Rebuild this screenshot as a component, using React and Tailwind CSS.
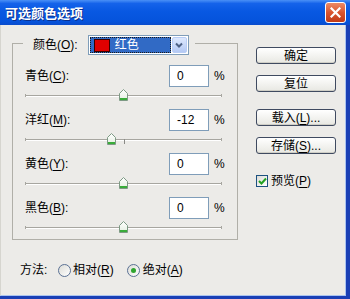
import React from "react";

// ─── DATA ─────────────────────────────
const ROWS = [
  { name: "青色", hot: "C", value: 0 },
  { name: "洋红", hot: "M", value: -12 },
  { name: "黄色", hot: "Y", value: 0 },
  { name: "黑色", hot: "B", value: 0 },
];

const BUTTONS = [
  { label: "确定", mt: "mt-0" },
  { label: "复位", mt: "mt-[11px]" },
  { label: "载入", hot: "L", dots: true, mt: "mt-[17px]" },
  { label: "存储", hot: "S", dots: true, mt: "mt-[11px]" },
];

const TRACK_W = 197;

function Hot({ name, hot, colon = true }) {
  return (
    <span className="whitespace-nowrap">
      {name}(<span className="underline underline-offset-2">{hot}</span>){colon ? ":" : ""}
    </span>
  );
}

// ─── SLIDER THUMB ─────────────────────────────
const Thumb = () => (
  <svg width="9" height="12" viewBox="0 0 9 12">
    <defs>
      <linearGradient id="tg" x1="0" y1="0" x2="0" y2="1">
        <stop offset="0" stopColor="#ffffff" />
        <stop offset="1" stopColor="#e4efe0" />
      </linearGradient>
    </defs>
    <polygon points="4.5,0.5 8.5,4.5 8.5,11.5 0.5,11.5 0.5,4.5" fill="url(#tg)" stroke="#7d9a84" />
    <rect x="1" y="9" width="7" height="2" fill="#3aac3a" />
  </svg>
);

function Slider({ value }) {
  const left = TRACK_W / 2 + (value / 100) * (TRACK_W / 2) - 4.5;
  return (
    <div className="relative ml-[12px] mt-[2px] h-[12px]" style={{ width: TRACK_W }}>
      <div className="absolute left-0 right-0 top-[6px] h-[1px] bg-[#a7a6a0]" />
      <div className="absolute left-0 right-0 top-[7px] h-[1px] bg-[#ffffff]" />
      <div className="absolute left-0 top-[5px] h-[3px] w-[1px] bg-[#a7a6a0]" />
      <div className="absolute right-0 top-[5px] h-[3px] w-[1px] bg-[#a7a6a0]" />
      {value !== 0 && (
        <div className="absolute top-[6px] h-[5px] w-[1px] bg-[#8a8a86]" style={{ left: TRACK_W / 2 }} />
      )}
      <div className="absolute top-0" style={{ left }}>
        <Thumb />
      </div>
    </div>
  );
}

function Row({ row }) {
  return (
    <div>
      <div className="flex items-center h-[22px] pl-[12px]">
        <div className="w-[144px]">
          <Hot name={row.name} hot={row.hot} />
        </div>
        <div className="w-[40px] h-[22px] border border-[#7f9db9] bg-white flex items-center pl-[7px]">
          {row.value}
        </div>
        <span className="ml-[5px]">%</span>
      </div>
      <Slider value={row.value} />
    </div>
  );
}

// ─── DROPDOWN ─────────────────────────────
const Dropdown = () => (
  <div className="w-[101px] h-[20px] border border-[#7f9db9] bg-white flex p-[1px]">
    <div className="flex-1 border border-dotted border-[#1a1a1a] bg-[#316ac5] flex items-center pl-[3px] gap-[5px]">
      <div className="w-[16px] h-[13px] bg-[#e00000] border border-[#3a0000]" />
      <span className="text-white leading-none">红色</span>
    </div>
    <div className="ml-[1px] w-[15px] rounded-[2px] border border-[#b9cdf5] bg-gradient-to-b from-[#dde8fd] to-[#b4c9f4] flex items-center justify-center">
      <svg width="8" height="6" viewBox="0 0 8 6">
        <path d="M1 1.5 L4 4.5 L7 1.5" fill="none" stroke="#4d6185" strokeWidth="2" />
      </svg>
    </div>
  </div>
);

function Radio({ checked }) {
  return (
    <div className="w-[13px] h-[13px] rounded-full border border-[#5a7194] bg-gradient-to-br from-[#dcdcd6] to-white flex items-center justify-center">
      {checked && <div className="w-[5px] h-[5px] rounded-full bg-[#2fa52f]" />}
    </div>
  );
}

export default function App() {
  return (
    <div className="w-[350px] h-[299px] flex flex-col overflow-hidden text-[12px] text-black font-['Liberation_Sans','Noto_Sans_CJK_SC',sans-serif]">
      {/* TITLE BAR */}
      <div className="h-[25px] shrink-0 flex items-center justify-between pl-[5px] pr-[4px] bg-[linear-gradient(to_bottom,#4a90f6_0%,#1563ea_14%,#0858e2_45%,#0553dc_85%,#0a4ccc_100%)]">
        <span className="text-white font-bold text-[13px] font-['Noto_Sans_CJK_SC',sans-serif] [text-shadow:1px_1px_0_#0b2f8a] leading-none">
          可选颜色选项
        </span>
        <div className="w-[21px] h-[21px] rounded-[3px] border border-white bg-gradient-to-b from-[#ec8a66] via-[#d9552f] to-[#c13a16] flex items-center justify-center">
          <svg width="11" height="11" viewBox="0 0 11 11">
            <path d="M1.5 1.5 L9.5 9.5 M9.5 1.5 L1.5 9.5" stroke="white" strokeWidth="2.2" strokeLinecap="square" />
          </svg>
        </div>
      </div>

      {/* BODY */}
      <div className="flex-1 flex border-r-[4px] border-b-[3px] border-[#1a3fb5]">
        <div className="flex-1 flex bg-[#ecebe8] border-l border-[#d6d5cf] border-r border-b border-r-[#a9c3f0] border-b-[#a9c3f0]">
          {/* LEFT COLUMN */}
          <div className="flex flex-col pl-[11px]">
            <div className="mt-[18px] w-[226px] h-[197px] border border-[#b0afa8]">
              {/* LEGEND */}
              <div className="-mt-[9px] ml-[10px] w-fit bg-[#ecebe8] flex items-center pl-[10px] pr-[6px] gap-[10px]">
                <Hot name="颜色" hot="O" />
                <Dropdown />
              </div>
              <div className="mt-[10px] flex flex-col gap-[8px]">
                {ROWS.map((r) => (
                  <Row key={r.hot} row={r} />
                ))}
              </div>
            </div>

            {/* METHOD */}
            <div className="mt-[22px] ml-[8px] h-[16px] flex items-center">
              <span className="w-[38px]">方法:</span>
              <Radio />
              <span className="ml-[2px]">
                <Hot name="相对" hot="R" colon={false} />
              </span>
              <span className="ml-[13px]">
                <Radio checked />
              </span>
              <span className="ml-[3px]">
                <Hot name="绝对" hot="A" colon={false} />
              </span>
            </div>
          </div>

          {/* RIGHT COLUMN */}
          <div className="ml-[18px] mt-[22px] flex flex-col">
            {BUTTONS.map((b) => (
              <button
                key={b.label}
                className={`${b.mt} w-[80px] h-[17px] rounded-[3px] border border-[#3f4a60] bg-gradient-to-b from-white to-[#e8e8e2] shadow-[inset_0_-1px_0_#cfcec6] flex items-center justify-center leading-none`}
              >
                {b.hot ? (
                  <span>
                    {b.label}(<span className="underline underline-offset-2">{b.hot}</span>)...
                  </span>
                ) : (
                  b.label
                )}
              </button>
            ))}

            {/* PREVIEW */}
            <div className="mt-[18px] flex items-center gap-[3px]">
              <div className="w-[12px] h-[12px] border border-[#1c5180] bg-gradient-to-br from-[#dcdcd6] to-white flex items-center justify-center">
                <svg width="9" height="8" viewBox="0 0 9 8">
                  <path d="M1 4 L3.5 6.5 L8 1.5" fill="none" stroke="#21a121" strokeWidth="2" />
                </svg>
              </div>
              <Hot name="预览" hot="P" colon={false} />
            </div>
          </div>
        </div>
      </div>
    </div>
  );
}
